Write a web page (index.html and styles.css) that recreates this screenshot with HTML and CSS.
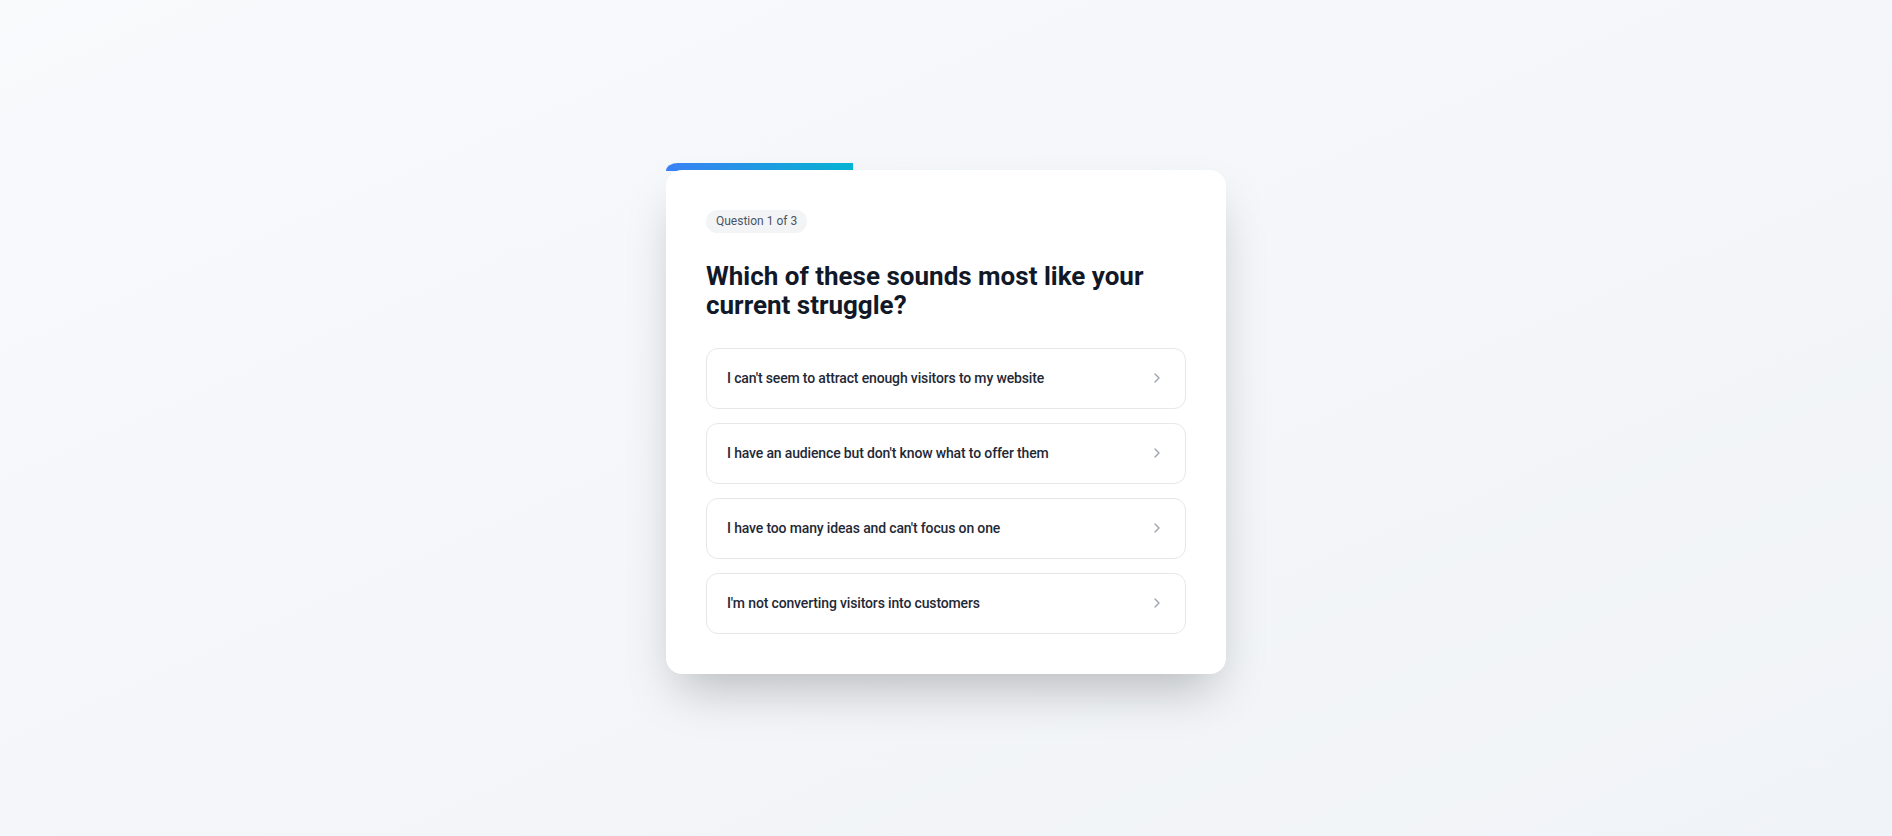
FILE: index.html
```html
<!DOCTYPE html>
<html lang="en">
<head>
    <meta charset="UTF-8">
    <meta name="viewport" content="width=device-width, initial-scale=1.0">
    <title>Quiz</title>
    <link rel="stylesheet" href="styles.css">
</head>
<body>

    <div class="quiz">
        <div class="progress">
            <div class="progress-fill"></div>
        </div>

        <div class="card">
            <span class="badge">Question 1 of 3</span>

            <h1>Which of these sounds most like your current struggle?</h1>

            <div class="options">
                <button class="option">
                    <span>I can't seem to attract enough visitors to my website</span>
                    <svg class="chevron" viewBox="0 0 24 24"><path d="m9 18 6-6-6-6"/></svg>
                </button>
                <button class="option">
                    <span>I have an audience but don't know what to offer them</span>
                    <svg class="chevron" viewBox="0 0 24 24"><path d="m9 18 6-6-6-6"/></svg>
                </button>
                <button class="option">
                    <span>I have too many ideas and can't focus on one</span>
                    <svg class="chevron" viewBox="0 0 24 24"><path d="m9 18 6-6-6-6"/></svg>
                </button>
                <button class="option">
                    <span>I'm not converting visitors into customers</span>
                    <svg class="chevron" viewBox="0 0 24 24"><path d="m9 18 6-6-6-6"/></svg>
                </button>
            </div>
        </div>
    </div>

</body>
</html>
```

FILE: styles.css
```css
* {
    box-sizing: border-box;
}

body {
    margin: 0;
    min-height: 100vh;
    display: flex;
    align-items: center;
    justify-content: center;
    font-family: Roboto, "Noto Sans", sans-serif;
    background: linear-gradient(to bottom right, #f8fafc, #f0f3f7);
    color: #1f2937;
}

.quiz {
    width: 560px;
}

.progress {
    height: 7px;
}

.progress-fill {
    width: 33.33%;
    height: 8px;
    border-top-left-radius: 12px 8px;
    background: linear-gradient(to right, #3b82f6, #06b6d4);
}

.card {
    background-color: #fff;
    border-radius: 16px;
    padding: 40px;
    box-shadow: 0 25px 50px -12px rgba(0, 0, 0, 0.25);
}

.badge {
    display: inline-block;
    padding: 4px 10px;
    font-size: 12px;
    line-height: 15px;
    color: #4b5563;
    background-color: #f3f4f6;
    border-radius: 999px;
}

h1 {
    margin: 29px 0 28px;
    font-size: 26px;
    line-height: 29px;
    font-weight: 700;
    color: #111827;
}

.options {
    display: flex;
    flex-direction: column;
    gap: 14px;
}

.option {
    display: flex;
    align-items: center;
    justify-content: space-between;
    width: 100%;
    padding: 19px 20px;
    font-family: inherit;
    font-size: 14px;
    line-height: 21px;
    font-weight: 500;
    letter-spacing: -0.15px;
    color: #1f2937;
    text-align: left;
    background-color: #fff;
    border: 1px solid #e5e7eb;
    border-radius: 12px;
    cursor: pointer;
}

.chevron {
    width: 16px;
    height: 16px;
    fill: none;
    stroke: #9ca3af;
    stroke-width: 2;
    stroke-linecap: round;
    stroke-linejoin: round;
}
```
